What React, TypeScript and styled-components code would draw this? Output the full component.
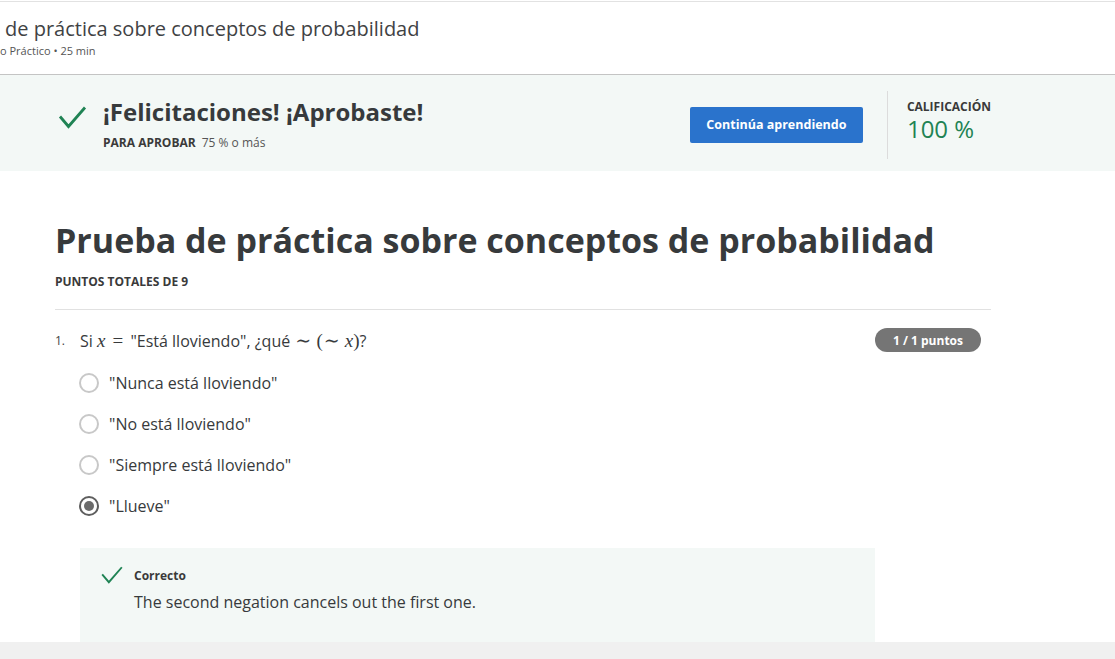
import React from "react";
import styled, { createGlobalStyle } from "styled-components";

const Global = createGlobalStyle`
  html, body { margin: 0; padding: 0; background: #fff; }
  body { font-family: "Open Sans", "Noto Sans", sans-serif; color: #373a3c; }
  * { box-sizing: border-box; }
`;

const Page = styled.div`
  width: 1115px;
  height: 659px;
  display: flex;
  flex-direction: column;
  overflow: hidden;
  background: #fff;
`;

const Scroll = styled.div`
  flex: 1;
  overflow: hidden;
  display: flex;
  flex-direction: column;
`;

const TopBar = styled.header`
  margin-top: 1px;
  border-top: 1px solid #e2e2e2;
  border-bottom: 1px solid #c4c4c4;
  height: 74px;
  padding: 13px 0 0 5px;
  flex-shrink: 0;
  overflow: hidden;
`;

const TopTitle = styled.div`
  font-size: 20px;
  line-height: 28px;
  color: #3f4244;
  white-space: nowrap;
`;

const TopMeta = styled.div`
  font-size: 11px;
  line-height: 16px;
  color: #555;
  margin-left: -5px;
  white-space: nowrap;
`;

const Banner = styled.section`
  background: #f3f8f6;
  height: 96px;
  flex-shrink: 0;
  padding-left: 55px;
  display: flex;
`;

const BannerInner = styled.div`
  width: 936px;
  display: flex;
  align-items: center;
  justify-content: space-between;
`;

const PassBlock = styled.div`
  display: flex;
  align-items: flex-start;
  gap: 16px;
  padding-left: 3px;
`;

const CheckSlot = styled.span<{ $top: number }>`
  display: inline-flex;
  padding-top: ${(p) => p.$top}px;
`;

const PassText = styled.div`
  display: flex;
  flex-direction: column;
`;

const PassTitle = styled.div`
  font-size: 24px;
  font-weight: 700;
  line-height: 32px;
  color: #373a3c;
`;

const PassSub = styled.div`
  font-size: 12px;
  line-height: 16px;
  margin-top: 7px;
  color: #555;
  display: flex;
  gap: 6px;
`;

const Strong = styled.span`
  font-weight: 700;
  color: #3a3a3a;
`;

const RightBlock = styled.div`
  display: flex;
  align-items: center;
  height: 68px;
  margin-top: 3px;
`;

const PrimaryButton = styled.button`
  width: 173px;
  height: 36px;
  background: #2a73cc;
  border: none;
  border-radius: 2px;
  color: #fff;
  font-family: "Open Sans", sans-serif;
  font-weight: 700;
  font-size: 12.5px;
  cursor: pointer;
`;

const VDivider = styled.div`
  width: 1px;
  align-self: stretch;
  background: #dcdcdc;
  margin: 0 19px 0 24px;
`;

const Grade = styled.div`
  display: flex;
  flex-direction: column;
  align-self: flex-start;
`;

const GradeLabel = styled.div`
  font-size: 12px;
  font-weight: 700;
  line-height: 14px;
  color: #3a3a3a;
  margin-top: 9px;
`;

const GradeValue = styled.div`
  font-size: 24px;
  line-height: 28px;
  margin-top: 1px;
  color: #1f8354;
`;

const Main = styled.main`
  padding: 46px 0 0 55px;
  width: 991px;
`;

const Title = styled.h1`
  margin: 0;
  font-size: 34px;
  line-height: 46px;
  font-weight: 700;
  color: #373a3c;
  white-space: nowrap;
`;

const Caption = styled.div`
  font-size: 12px;
  font-weight: 700;
  line-height: 16px;
  color: #3a3a3a;
  margin-top: 11px;
`;

const HRule = styled.hr`
  border: none;
  border-top: 1px solid #e1e1e1;
  margin: 19px 0 0;
`;

const QuestionRow = styled.div`
  display: flex;
  align-items: center;
  margin-top: 17px;
  height: 26px;
`;

const QNum = styled.span`
  font-size: 12px;
  width: 25px;
  color: #444;
`;

const QText = styled.span`
  font-size: 16px;
  flex: 1;
  color: #373a3c;
`;

const MathI = styled.span`
  font-family: "Liberation Serif", "DejaVu Serif", serif;
  font-style: italic;
  font-size: 19px;
`;

const MathO = styled.span<{ $pad?: number }>`
  font-family: "Liberation Serif", "DejaVu Serif", serif;
  font-size: 19px;
  padding: 0 ${(p) => p.$pad ?? 0}px;
`;

const Badge = styled.span`
  background: #757575;
  color: #fff;
  font-size: 12px;
  font-weight: 700;
  border-radius: 12px;
  height: 24px;
  width: 106px;
  display: inline-flex;
  align-items: center;
  justify-content: center;
  margin-right: 10px;
`;

const Options = styled.div`
  display: flex;
  flex-direction: column;
  gap: 17px;
  padding-left: 24px;
  margin-top: 18px;
`;

const Option = styled.label`
  display: flex;
  align-items: center;
  gap: 10px;
  height: 24px;
  font-size: 16px;
  color: #373a3c;
`;

const Radio = styled.span<{ $checked?: boolean }>`
  width: 20px;
  height: 20px;
  border-radius: 50%;
  border: 2px solid ${(p) => (p.$checked ? "#5e5e5e" : "#c8c8c8")};
  display: inline-flex;
  align-items: center;
  justify-content: center;
  flex-shrink: 0;
  &::after {
    content: "";
    display: ${(p) => (p.$checked ? "block" : "none")};
    width: 10px;
    height: 10px;
    border-radius: 50%;
    background: #6b6b6b;
  }
`;

const Feedback = styled.div`
  margin: 30px 0 0 25px;
  width: 795px;
  height: 120px;
  background: #f3f8f6;
  padding: 18px 0 0 21px;
  display: flex;
  gap: 11px;
`;

const FeedbackBody = styled.div`
  display: flex;
  flex-direction: column;
  padding-top: 2px;
`;

const FeedbackLabel = styled.div`
  font-size: 12px;
  font-weight: 700;
  line-height: 16px;
  color: #3a3a3a;
`;

const FeedbackText = styled.div`
  font-size: 16px;
  line-height: 22px;
  margin-top: 7px;
  color: #373a3c;
`;

const Footer = styled.footer`
  height: 17px;
  background: #f0f0f0;
  flex-shrink: 0;
`;

const Check = ({ w, h, sw }: { w: number; h: number; sw: number }) => (
  <svg width={w} height={h} viewBox="0 0 28 24" fill="none">
    <path d="M1.5 10.5 L10 20.5 L26.5 1.5" stroke="#1f8354" strokeWidth={sw} strokeLinecap="butt" strokeLinejoin="miter" />
  </svg>
);

const options = [
  { text: '"Nunca está lloviendo"', checked: false },
  { text: '"No está lloviendo"', checked: false },
  { text: '"Siempre está lloviendo"', checked: false },
  { text: '"Llueve"', checked: true },
];

export default function App() {
  return (
    <Page>
      <Global />
      <Scroll>
        <TopBar>
          <TopTitle>de práctica sobre conceptos de probabilidad</TopTitle>
          <TopMeta>o Práctico • 25 min</TopMeta>
        </TopBar>
        <Banner>
          <BannerInner>
            <PassBlock>
              <CheckSlot $top={10}>
                <Check w={29} h={24} sw={2.8} />
              </CheckSlot>
              <PassText>
                <PassTitle>¡Felicitaciones! ¡Aprobaste!</PassTitle>
                <PassSub>
                  <Strong>PARA APROBAR</Strong>
                  <span>75 % o más</span>
                </PassSub>
              </PassText>
            </PassBlock>
            <RightBlock>
              <PrimaryButton>Continúa aprendiendo</PrimaryButton>
              <VDivider />
              <Grade>
                <GradeLabel>CALIFICACIÓN</GradeLabel>
                <GradeValue>100 %</GradeValue>
              </Grade>
            </RightBlock>
          </BannerInner>
        </Banner>
        <Main>
          <Title>Prueba de práctica sobre conceptos de probabilidad</Title>
          <Caption>PUNTOS TOTALES DE 9</Caption>
          <HRule />
          <QuestionRow>
            <QNum>1.</QNum>
            <QText>
              Si <MathI>x</MathI> <MathO $pad={3}>=</MathO> "Está lloviendo", ¿qué <MathO $pad={1}>∼</MathO>{" "}
              <MathO>(</MathO>
              <MathO $pad={1}>∼</MathO> <MathI>x</MathI>
              <MathO>)</MathO>?
            </QText>
            <Badge>1 / 1 puntos</Badge>
          </QuestionRow>
          <Options>
            {options.map((o) => (
              <Option key={o.text}>
                <Radio $checked={o.checked} />
                {o.text}
              </Option>
            ))}
          </Options>
          <Feedback>
            <CheckSlot $top={0}>
              <Check w={22} h={19} sw={2.4} />
            </CheckSlot>
            <FeedbackBody>
              <FeedbackLabel>Correcto</FeedbackLabel>
              <FeedbackText>The second negation cancels out the first one.</FeedbackText>
            </FeedbackBody>
          </Feedback>
        </Main>
      </Scroll>
      <Footer />
    </Page>
  );
}
